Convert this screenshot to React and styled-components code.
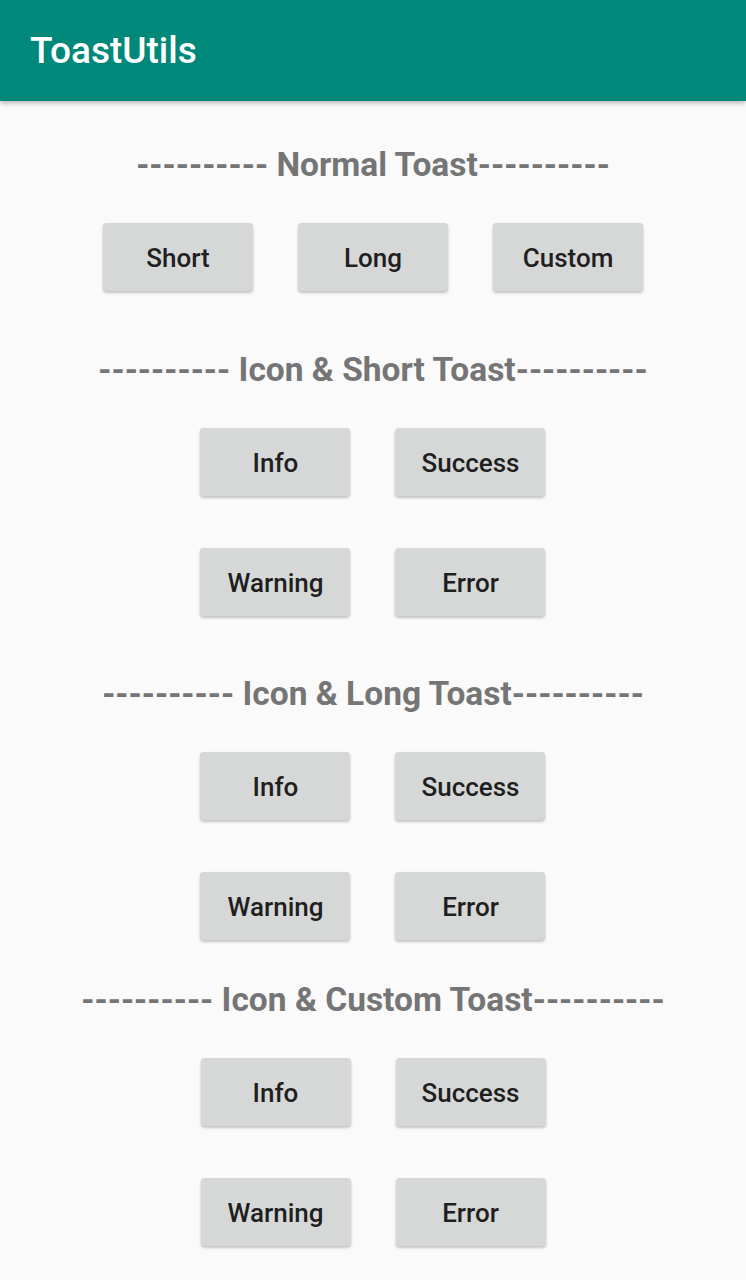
import React from "react";
import styled, { createGlobalStyle } from "styled-components";

const Global = createGlobalStyle`
  html, body { margin: 0; padding: 0; background: #fafafa; }
  body { font-family: Roboto, "Noto Sans", sans-serif; }
`;

const Page = styled.div`
  width: 746px;
  min-height: 1280px;
  background: #fafafa;
  display: flex;
  flex-direction: column;
`;

const AppBar = styled.header`
  height: 101px;
  background: #00887a;
  display: flex;
  align-items: center;
  padding-left: 30px;
  box-shadow: 0 2px 5px rgba(0, 0, 0, 0.28);
  position: relative;
  z-index: 1;
`;

const Title = styled.h1`
  margin: 0;
  font-size: 37px;
  font-weight: 500;
  color: #ffffff;
  letter-spacing: 0;
`;

const Content = styled.main`
  display: flex;
  flex-direction: column;
  align-items: center;
  padding-top: 44px;
`;

const Section = styled.section`
  display: flex;
  flex-direction: column;
  align-items: center;
  margin-top: ${(p) => p.$top || 0}px;
`;

const Header = styled.h2`
  margin: 0 0 38px;
  height: 40px;
  line-height: 40px;
  font-size: 33.5px;
  font-weight: 700;
  color: #757575;
  white-space: nowrap;
`;

const Rows = styled.div`
  display: flex;
  flex-direction: column;
  gap: 52px;
`;

const Row = styled.div`
  display: flex;
  justify-content: center;
  gap: 45px;
`;

const Button = styled.button`
  width: 150px;
  height: 68px;
  border: none;
  border-radius: 4px;
  background: #d6d7d7;
  color: #1f1f1f;
  font-family: Roboto, "Noto Sans", sans-serif;
  font-size: 26px;
  font-weight: 500;
  padding: 2px 0 0;
  box-shadow: 0 2px 3px rgba(0, 0, 0, 0.22), 0 0 1px rgba(0, 0, 0, 0.1);
  cursor: pointer;
`;

const dashes = "----------";

const sections = [
  { title: "Normal Toast", top: 0, rows: [["Short", "Long", "Custom"]] },
  { title: "Icon & Short Toast", top: 59, rows: [["Info", "Success"], ["Warning", "Error"]] },
  { title: "Icon & Long Toast", top: 58, rows: [["Info", "Success"], ["Warning", "Error"]] },
  { title: "Icon & Custom Toast", top: 40, rows: [["Info", "Success"], ["Warning", "Error"]] },
];

export default function App() {
  return (
    <Page>
      <Global />
      <AppBar>
        <Title>ToastUtils</Title>
      </AppBar>
      <Content>
        {sections.map((s) => (
          <Section key={s.title} $top={s.top}>
            <Header>{`${dashes} ${s.title}${dashes}`}</Header>
            <Rows>
              {s.rows.map((r, i) => (
                <Row key={i}>
                  {r.map((b) => (
                    <Button key={b}>{b}</Button>
                  ))}
                </Row>
              ))}
            </Rows>
          </Section>
        ))}
      </Content>
    </Page>
  );
}
